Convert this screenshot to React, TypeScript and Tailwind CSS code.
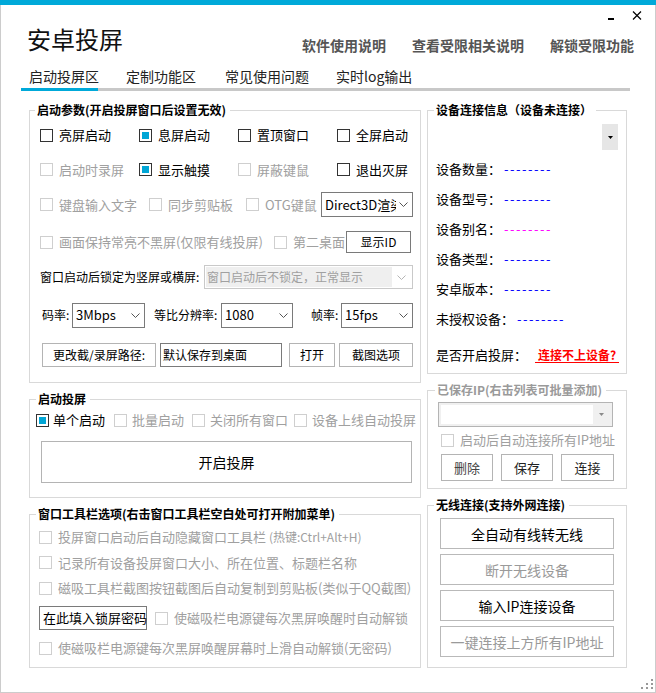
import React from "react";

function Box({ checked, disabled }: { checked?: boolean; disabled?: boolean }) {
  if (checked)
    return (
      <span className="flex h-[13px] w-[13px] shrink-0 border border-[#333] bg-white p-[2px]">
        <span className="flex-1 bg-[#00a6d6]" />
      </span>
    );
  return (
    <span
      className={`h-[13px] w-[13px] shrink-0 border bg-white ${
        disabled ? "border-[#cfcfcf]" : "border-[#333]"
      }`}
    />
  );
}

function Check({
  label,
  checked,
  disabled,
  gap = "gap-[6px]",
  className = "",
  children,
}: {
  label?: string;
  checked?: boolean;
  disabled?: boolean;
  gap?: string;
  className?: string;
  children?: React.ReactNode;
}) {
  return (
    <div className={`flex items-center ${gap} ${className}`}>
      <Box checked={checked} disabled={disabled} />
      <span
        className={`whitespace-nowrap text-[13px] leading-[18px] ${
          disabled ? "text-[#a0a0a0]" : "text-black"
        }`}
      >
        {label}
        {children}
      </span>
    </div>
  );
}

function Chevron({ color = "#555" }: { color?: string }) {
  return (
    <svg width="9" height="5" viewBox="0 0 9 5" className="shrink-0">
      <polyline points="0.5,0.5 4.5,4.5 8.5,0.5" fill="none" stroke={color} strokeWidth="1" />
    </svg>
  );
}

function Select({ value, className = "" }: { value: string; className?: string }) {
  return (
    <div
      className={`flex items-center gap-[3px] border border-[#7a7a7a] bg-white pl-[3px] pr-[4px] ${className}`}
    >
      <span className="flex-1 overflow-hidden whitespace-nowrap text-[13px] leading-[18px] text-black">
        {value}
      </span>
      <Chevron />
    </div>
  );
}

function Btn({
  children,
  className = "",
}: {
  children: React.ReactNode;
  className?: string;
}) {
  return (
    <div
      className={`flex items-center justify-center whitespace-nowrap border bg-white ${className}`}
    >
      {children}
    </div>
  );
}

function InfoLine({ label, dash = "text-[#0000ff]" }: { label: string; dash?: string }) {
  return (
    <div className="flex h-[30px] items-center pl-[8px] text-[13px] leading-[30px] text-black">
      <span>{label}</span>
      <span className={`ml-[3px] tracking-[1.5px] ${dash}`}>--------</span>
    </div>
  );
}

export default function App() {
  return (
    <div className="h-[693px] w-[656px] overflow-hidden bg-white font-['Noto_Sans_CJK_SC','Noto_Sans',sans-serif] text-black">
      <div className="h-[5px] bg-[#00a9d9]" />
      <div className="relative h-[688px] border-x border-b border-[#cccccc] bg-white">
        {/* window controls */}
        <div className="flex h-[22px] items-start justify-end gap-[18px] pr-[13px]">
          <div className="mt-[13px] h-[2px] w-[6px] bg-black" />
          <svg className="mt-[6px]" width="10" height="9" viewBox="0 0 10 9">
            <path d="M1 0.5 L9 8.5 M9 0.5 L1 8.5" stroke="#000" strokeWidth="1.2" fill="none" />
          </svg>
        </div>

        {/* title row */}
        <div className="flex h-[30px] items-start">
          <div className="ml-[26px] text-[24px] leading-[24px] text-[#111]">安卓投屏</div>
          <div className="ml-auto mr-[21px] mt-[8px] flex gap-[26px] text-[14px] font-bold leading-[20px] text-[#555]">
            <span>软件使用说明</span>
            <span>查看受限相关说明</span>
            <span>解锁受限功能</span>
          </div>
        </div>

        {/* tabs */}
        <div className="flex h-[31px] items-start text-[14px] leading-[20px] text-[#222]">
          <span className="ml-[28px] mt-[9px] w-[97px]">启动投屏区</span>
          <span className="mt-[9px] w-[99px]">定制功能区</span>
          <span className="mt-[9px] w-[111px]">常见使用问题</span>
          <span className="mt-[9px]">实时log输出</span>
        </div>
        <div className="ml-[20px] flex h-[3px] w-[609px]">
          <div className="w-[77px] bg-[#00a9d9]" />
          <div className="flex-1 bg-[#c8c8c8]" />
        </div>

        {/* columns */}
        <div className="mt-[11px] flex items-start">
          {/* left column */}
          <div className="ml-[28px] flex w-[392px] flex-col gap-[8px]">
            <fieldset className="h-[281px] min-w-0 border border-[#d9d9d9]">
              <legend className="ml-[5px] pl-[2px] pr-[4px] text-[12px] font-bold leading-[16px]">
                启动参数(开启投屏窗口后设置无效)
              </legend>
              <div className="grid h-[34px] grid-cols-[99px_99px_99px_1fr] items-center pl-[10px]">
                <Check label="亮屏启动" />
                <Check label="息屏启动" checked />
                <Check label="置顶窗口" />
                <Check label="全屏启动" />
              </div>
              <div className="grid h-[35px] grid-cols-[99px_99px_99px_1fr] items-center pl-[10px]">
                <Check label="启动时录屏" disabled />
                <Check label="显示触摸" checked />
                <Check label="屏蔽键鼠" disabled />
                <Check label="退出灭屏" />
              </div>
              <div className="flex h-[35px] items-center pl-[10px]">
                <Check label="键盘输入文字" disabled className="w-[109px]" />
                <Check label="同步剪贴板" disabled className="w-[97px]" />
                <Check label="OTG键鼠" disabled className="w-[75px]" />
                <Select value="Direct3D渲染" className="h-[25px] w-[92px]" />
              </div>
              <div className="flex h-[40px] items-center pl-[10px]">
                <Check label="画面保持常亮不黑屏(仅限有线投屏)" disabled className="w-[234px]" />
                <Check label="第二桌面" disabled className="w-[72px]" />
                <Btn className="h-[22px] w-[65px] border-[#7a7a7a] text-[12px] leading-[16px]">显示ID</Btn>
              </div>
              <div className="flex h-[30px] items-center pl-[10px]">
                <span className="w-[164px] whitespace-nowrap text-[12px] leading-[16px]">
                  窗口启动后锁定为竖屏或横屏:
                </span>
                <div className="flex h-[24px] w-[209px] items-stretch border border-[#c9c9c9] bg-white p-[1px]">
                  <div className="flex flex-1 items-center overflow-hidden whitespace-nowrap bg-[#efefef] pl-[1px] text-[12px] leading-[16px] text-[#a0a0a0]">
                    窗口启动后不锁定，正常显示
                  </div>
                  <div className="flex w-[19px] items-center justify-center">
                    <Chevron color="#b5b5b5" />
                  </div>
                </div>
              </div>
              <div className="flex h-[46px] items-center pl-[12px] text-[12px] leading-[16px]">
                <span className="w-[30px] whitespace-nowrap">码率:</span>
                <Select value="3Mbps" className="h-[25px] w-[73px]" />
                <span className="ml-[9px] w-[67px] whitespace-nowrap">等比分辨率:</span>
                <Select value="1080" className="h-[25px] w-[72px]" />
                <span className="ml-[18px] w-[30px] whitespace-nowrap">帧率:</span>
                <Select value="15fps" className="h-[25px] w-[72px]" />
              </div>
              <div className="flex h-[34px] items-center pl-[12px] text-[12px] leading-[16px]">
                <Btn className="h-[24px] w-[114px] border-[#b4b4b4]">更改截/录屏路径:</Btn>
                <div className="ml-[4px] flex h-[24px] w-[122px] items-center border border-[#7a7a7a] bg-white pl-[2px]">
                  默认保存到桌面
                </div>
                <Btn className="ml-[7px] h-[24px] w-[46px] border-[#b4b4b4]">打开</Btn>
                <Btn className="ml-[4px] h-[24px] w-[74px] border-[#b4b4b4]">截图选项</Btn>
              </div>
            </fieldset>

            <fieldset className="h-[107px] min-w-0 border border-[#d9d9d9]">
              <legend className="ml-[6px] pl-[2px] pr-[4px] text-[12px] font-bold leading-[16px]">
                启动投屏
              </legend>
              <div className="flex h-[26px] items-center pl-[6px]">
                <Check label="单个启动" checked gap="gap-[4px]" className="w-[78px]" />
                <Check label="批量启动" disabled gap="gap-[5px]" className="w-[78px]" />
                <Check label="关闭所有窗口" disabled gap="gap-[5px]" className="w-[102px]" />
                <Check label="设备上线自动投屏" disabled gap="gap-[5px]" />
              </div>
              <Btn className="ml-[11px] mt-[8px] h-[42px] w-[371px] border-[#b4b4b4] text-[14px] leading-[20px]">
                开启投屏
              </Btn>
            </fieldset>

            <fieldset className="h-[162px] min-w-0 border border-[#d9d9d9]">
              <legend className="ml-[6px] pl-[2px] pr-[4px] text-[12px] font-bold leading-[16px]">
                窗口工具栏选项(右击窗口工具栏空白处可打开附加菜单)
              </legend>
              <div className="mt-[2px] flex h-[26px] items-center pl-[9px]">
                <Check label="投屏窗口启动后自动隐藏窗口工具栏 " disabled>
                  <span className="text-[12px]">(热键:Ctrl+Alt+H)</span>
                </Check>
              </div>
              <div className="flex h-[25px] items-center pl-[9px]">
                <Check label="记录所有设备投屏窗口大小、所在位置、标题栏名称" disabled />
              </div>
              <div className="flex h-[26px] items-center pl-[9px]">
                <Check label="磁吸工具栏截图按钮截图后自动复制到剪贴板(类似于QQ截图)" disabled />
              </div>
              <div className="flex h-[34px] items-center pl-[9px]">
                <div className="flex h-[24px] w-[108px] items-center whitespace-nowrap border border-[#7a7a7a] bg-white pl-[3px] text-[13px] leading-[18px]">
                  在此填入锁屏密码
                </div>
                <Check label="使磁吸栏电源键每次黑屏唤醒时自动解锁" disabled className="ml-[8px]" />
              </div>
              <div className="flex h-[26px] items-center pl-[9px]">
                <Check label="使磁吸栏电源键每次黑屏唤醒屏幕时上滑自动解锁(无密码)" disabled />
              </div>
            </fieldset>
          </div>

          {/* right column */}
          <div className="ml-[6px] flex w-[200px] flex-col gap-[8px]">
            <fieldset className="h-[272px] min-w-0 border border-[#d9d9d9]">
              <legend className="ml-[6px] pl-[2px] pr-[4px] text-[12px] font-bold leading-[16px]">
                设备连接信息（设备未连接）
              </legend>
              <div className="mt-[6px] flex justify-end pr-[8px]">
                <div className="flex h-[26px] w-[16px] items-center justify-center bg-[#e6e6e6]">
                  <svg width="5" height="3" viewBox="0 0 5 3">
                    <polygon points="0,0 5,0 2.5,3" fill="#000" />
                  </svg>
                </div>
              </div>
              <div className="mt-[4px]">
                <InfoLine label="设备数量：" />
                <InfoLine label="设备型号：" />
                <InfoLine label="设备别名：" dash="text-[#ff00ff]" />
                <InfoLine label="设备类型：" />
                <InfoLine label="安卓版本：" />
                <InfoLine label="未授权设备：" />
                <div className="mt-[6px] flex h-[30px] items-center pl-[8px] text-[13px] leading-[30px]">
                  <span>是否开启投屏：</span>
                  <span className="ml-[8px] border-b border-[#ff0000] px-[3px] text-[12px] font-bold leading-[15px] text-[#ff0000]">
                    连接不上设备?
                  </span>
                </div>
              </div>
            </fieldset>

            <fieldset className="h-[107px] min-w-0 border border-[#d9d9d9]">
              <legend className="ml-[7px] pl-[2px] pr-[4px] text-[12px] font-bold leading-[16px] text-[#9a9a9a]">
                已保存IP(右击列表可批量添加)
              </legend>
              <div className="ml-[10px] mt-[4px] flex h-[25px] w-[175px] items-stretch border border-[#b4b4b4] bg-[#f0f0f0] p-[2px]">
                <div className="w-[152px] bg-white" />
                <div className="flex flex-1 items-center justify-center">
                  <svg width="5" height="3" viewBox="0 0 5 3">
                    <polygon points="0,0 5,0 2.5,3" fill="#8a8a8a" />
                  </svg>
                </div>
              </div>
              <div className="mt-[1px] flex h-[24px] items-center pl-[13px]">
                <Check label="启动后自动连接所有IP地址" disabled />
              </div>
              <div className="mt-[2px] flex gap-[8px] pl-[13px] text-[13px] leading-[18px]">
                <Btn className="h-[27px] w-[52px] border-[#b4b4b4] text-[#444]">删除</Btn>
                <Btn className="h-[27px] w-[52px] border-[#b4b4b4] text-[#222]">保存</Btn>
                <Btn className="h-[27px] w-[53px] border-[#b4b4b4] text-[#222]">连接</Btn>
              </div>
            </fieldset>

            <fieldset className="h-[171px] min-w-0 border border-[#d9d9d9]">
              <legend className="ml-[6px] pl-[2px] pr-[4px] text-[12px] font-bold leading-[16px]">
                无线连接(支持外网连接)
              </legend>
              <div className="ml-[12px] mt-[5px] flex w-[174px] flex-col gap-[5px] text-[14px] leading-[20px]">
                <Btn className="h-[31px] border-[#b9b9b9] text-black">全自动有线转无线</Btn>
                <Btn className="h-[31px] border-[#b9b9b9] text-[#9a9a9a]">断开无线设备</Btn>
                <Btn className="h-[31px] border-[#b9b9b9] text-black">输入IP连接设备</Btn>
                <Btn className="h-[31px] border-[#b9b9b9] text-[#9a9a9a]">一键连接上方所有IP地址</Btn>
              </div>
            </fieldset>
          </div>
        </div>

        {/* resize grip */}
        <svg className="absolute bottom-[3px] right-[2px]" width="12" height="10" viewBox="0 0 12 10">
          <rect x="10" y="0" width="2" height="2" fill="#999" />
          <rect x="5" y="4" width="2" height="2" fill="#999" />
          <rect x="10" y="4" width="2" height="2" fill="#999" />
          <rect x="0" y="8" width="2" height="2" fill="#999" />
          <rect x="5" y="8" width="2" height="2" fill="#999" />
          <rect x="10" y="8" width="2" height="2" fill="#999" />
        </svg>
      </div>
    </div>
  );
}
